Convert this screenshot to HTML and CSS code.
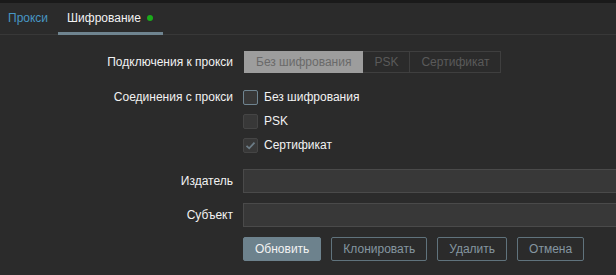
FILE: index.html
```html
<!DOCTYPE html>
<html lang="ru">
<head>
    <meta charset="UTF-8">
    <title>Шифрование</title>
    <link rel="stylesheet" href="styles.css">
</head>
<body>
    <div class="top-strip"></div>

    <!-- Вкладки -->
    <ul class="tabs">
        <li class="tab"><a href="#">Прокси</a></li>
        <li class="tab active">Шифрование <span class="dot"></span></li>
    </ul>

    <form class="form-grid">
        <label class="form-label">Подключения к прокси</label>
        <div class="segmented">
            <span class="seg checked">Без шифрования</span>
            <span class="seg">PSK</span>
            <span class="seg">Сертификат</span>
        </div>

        <label class="form-label label-top">Соединения с прокси</label>
        <ul class="check-list">
            <li><span class="box focus"></span>Без шифрования</li>
            <li><span class="box"></span>PSK</li>
            <li>
                <span class="box">
                    <svg width="13" height="13" viewBox="0 0 13 13"><path d="M2.5 6.8 L5.2 9.3 L10.5 3.6" fill="none" stroke="#6c7c86" stroke-width="1.8"/></svg>
                </span>Сертификат
            </li>
        </ul>

        <label class="form-label">Издатель</label>
        <input type="text" class="text-input">

        <label class="form-label">Субъект</label>
        <input type="text" class="text-input">

        <div></div>
        <div class="buttons">
            <button type="button" class="btn">Обновить</button>
            <button type="button" class="btn alt">Клонировать</button>
            <button type="button" class="btn alt">Удалить</button>
            <button type="button" class="btn alt">Отмена</button>
        </div>
    </form>
</body>
</html>
```

FILE: styles.css
```css
body {
    font-family: Arial, "Liberation Sans", sans-serif;
    font-size: 12px;
    background-color: #2b2b2b;
    color: #f2f2f2;
    margin: 0;
    padding: 0;
    overflow: hidden;
}

.top-strip {
    height: 3px;
    background-color: #1a1a1a;
}

/* Вкладки */
.tabs {
    list-style: none;
    margin: 0;
    padding: 0;
    display: flex;
    height: 31px;
    border-bottom: 1px solid #383838;
}

.tab {
    display: flex;
    align-items: center;
    padding: 0 9px;
    height: 32px;
    box-sizing: border-box;
    margin-bottom: -1px;
    border-bottom: 3px solid transparent;
    padding-top: 1px;
}

.tab:first-child {
    padding-left: 8px;
    padding-right: 10px;
}

.tab a {
    color: #4796c4;
    text-decoration: none;
}

.tab.active {
    border-bottom-color: #6f8490;
    padding-right: 10px;
}

.dot {
    display: inline-block;
    width: 6px;
    height: 6px;
    border-radius: 50%;
    background-color: #1bab1b;
    margin-left: 6px;
}

/* Форма */
.form-grid {
    display: grid;
    grid-template-columns: 233px 1fr;
    column-gap: 10px;
    row-gap: 10px;
    margin-top: 16px;
}

.form-label {
    text-align: right;
    align-self: center;
}

.label-top {
    align-self: start;
    line-height: 24px;
    padding-top: 2px;
}

.segmented {
    display: flex;
    height: 22px;
    margin-left: 1px;
}

.seg {
    display: flex;
    align-items: center;
    padding: 0 11px;
    border: 1px solid #3f3f3f;
    border-left: none;
    color: #5a5a5a;
}

.seg:first-child {
    border-left: 1px solid #3f3f3f;
}

.seg.checked {
    background-color: #9d9d9d;
    border-color: #9d9d9d;
    color: #6a6a6a;
}

.check-list {
    list-style: none;
    margin: 0;
    padding: 2px 0;
}

.check-list li {
    display: flex;
    align-items: center;
    height: 24px;
}

.box {
    box-sizing: border-box;
    width: 15px;
    height: 15px;
    background-color: #383838;
    border: 1px solid #454545;
    border-radius: 2px;
    margin-right: 6px;
    display: flex;
    align-items: center;
    justify-content: center;
}

.box.focus {
    border-color: #6f8490;
}

.text-input {
    box-sizing: border-box;
    height: 24px;
    margin: 0 0 0 0;
    width: 400px;
    background-color: #383838;
    border: 1px solid #4a4a4a;
    color: #f2f2f2;
}

.buttons {
    display: flex;
    gap: 10px;
}

.btn {
    font-family: Arial, "Liberation Sans", sans-serif;
    font-size: 12px;
    height: 24px;
    padding: 0 11px;
    border: 1px solid #6d828d;
    border-radius: 2px;
    background-color: #6d828d;
    color: #f2f2f2;
    cursor: pointer;
}

.btn.alt {
    background-color: transparent;
    color: #8596a0;
    border-color: #60737d;
}
```
